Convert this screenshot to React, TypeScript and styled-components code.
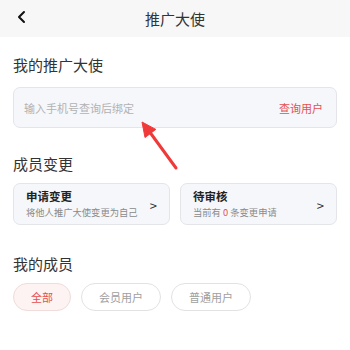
import React from "react";
import styled, { createGlobalStyle } from "styled-components";

const Global = createGlobalStyle`
  html, body { margin: 0; padding: 0; background: #ffffff; }
  body { font-family: "Noto Sans CJK SC", "Noto Sans", sans-serif; color: #333; }
  * { box-sizing: border-box; }
`;

const Page = styled.div`
  position: relative;
  width: 350px;
  height: 350px;
  overflow: hidden;
  background: #fff;
`;

const Header = styled.div`
  height: 37px;
  background: #f7f7f7;
  display: flex;
  align-items: center;
  justify-content: center;
  position: relative;
`;

const BackBtn = styled.div`
  position: absolute;
  left: 16px;
  top: 10px;
  width: 12px;
  height: 14px;
  display: flex;
`;

const Title = styled.div`
  font-size: 15px;
  color: #333;
  line-height: 20px;
`;

const Body = styled.div`
  padding: 17px 13px 0;
  display: flex;
  flex-direction: column;
`;

const Heading = styled.div<{ $mt?: number }>`
  font-size: 15px;
  line-height: 22px;
  height: 22px;
  color: #333;
  margin-top: ${(p) => p.$mt ?? 0}px;
`;

const SearchBox = styled.div`
  margin-top: 11px;
  height: 41px;
  background: #f6f7fa;
  border: 1px solid #e4e5e8;
  border-radius: 7px;
  display: flex;
  align-items: center;
  justify-content: space-between;
  padding: 0 13px 0 10px;
`;

const Placeholder = styled.span`
  font-size: 11px;
  color: #b2b2b2;
`;

const SearchLink = styled.span`
  font-size: 11px;
  color: #e5504e;
`;

const CardRow = styled.div`
  margin-top: 8px;
  display: flex;
  gap: 10px;
`;

const Card = styled.div`
  flex: 1;
  height: 42px;
  background: #f6f7fa;
  border: 1px solid #e4e5e8;
  border-radius: 7px;
  display: flex;
  align-items: center;
  justify-content: space-between;
  padding: 0 12px 0 12px;
`;

const CardText = styled.div`
  display: flex;
  flex-direction: column;
`;

const CardTitle = styled.div`
  font-size: 11.5px;
  font-weight: 700;
  color: #222;
  line-height: 15px;
`;

const CardSub = styled.div`
  font-size: 9.3px;
  color: #8a8a8a;
  line-height: 14px;
  margin-top: 1px;
`;

const Red = styled.span`
  color: #e5504e;
`;

const Chevron = styled.span`
  font-size: 13px;
  color: #333;
  margin-top: 2px;
`;

const ChipRow = styled.div`
  margin-top: 8px;
  display: flex;
  gap: 10px;
`;

const Chip = styled.div<{ $active?: boolean }>`
  height: 28px;
  padding: 0 17px;
  border-radius: 14px;
  display: flex;
  align-items: center;
  font-size: 11px;
  color: ${(p) => (p.$active ? "#e5504e" : "#a0a0a0")};
  background: ${(p) => (p.$active ? "#fdf3f2" : "#ffffff")};
  border: 1px solid ${(p) => (p.$active ? "#efdcdb" : "#e2e2e2")};
`;

const ArrowLayer = styled.svg`
  position: absolute;
  left: 0;
  top: 0;
  pointer-events: none;
`;

export default function App() {
  return (
    <Page>
      <Global />
      <Header>
        <BackBtn>
          <svg width="12" height="14" viewBox="0 0 12 14">
            <polyline points="8,2 3,7 8,12" fill="none" stroke="#111" strokeWidth="2" strokeLinecap="round" strokeLinejoin="round" />
          </svg>
        </BackBtn>
        <Title>推广大使</Title>
      </Header>
      <Body>
        <Heading>我的推广大使</Heading>
        <SearchBox>
          <Placeholder>输入手机号查询后绑定</Placeholder>
          <SearchLink>查询用户</SearchLink>
        </SearchBox>
        <Heading $mt={25}>成员变更</Heading>
        <CardRow>
          <Card>
            <CardText>
              <CardTitle>申请变更</CardTitle>
              <CardSub>将他人推广大使变更为自己</CardSub>
            </CardText>
            <Chevron>&gt;</Chevron>
          </Card>
          <Card>
            <CardText>
              <CardTitle>待审核</CardTitle>
              <CardSub>
                当前有 <Red>0</Red> 条变更申请
              </CardSub>
            </CardText>
            <Chevron>&gt;</Chevron>
          </Card>
        </CardRow>
        <Heading $mt={28}>我的成员</Heading>
        <ChipRow>
          <Chip $active>全部</Chip>
          <Chip>会员用户</Chip>
          <Chip>普通用户</Chip>
        </ChipRow>
      </Body>
      <ArrowLayer width="350" height="350" viewBox="0 0 350 350">
        <line x1="149" y1="131" x2="176" y2="168" stroke="#f03a3a" strokeWidth="3" strokeLinecap="round" />
        <polygon points="142,122 145,137.5 155.8,129.4" fill="#f03a3a" stroke="#f03a3a" strokeWidth="1" strokeLinejoin="round" />
      </ArrowLayer>
    </Page>
  );
}
